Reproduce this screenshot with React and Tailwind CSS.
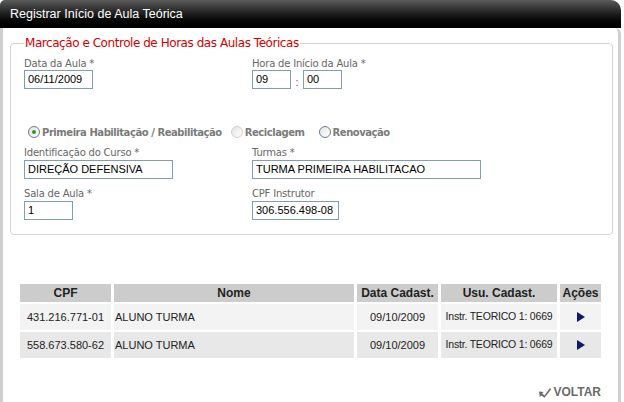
import React from 'react'

const rows = [
  { cpf: '431.216.771-01', nome: 'ALUNO TURMA', data: '09/10/2009', usu: 'Instr. TEORICO 1: 0669', bg: 'bg-[#f3f3f3]' },
  { cpf: '558.673.580-62', nome: 'ALUNO TURMA', data: '09/10/2009', usu: 'Instr. TEORICO 1: 0669', bg: 'bg-[#e8e8e8]' },
]

const Label = ({ children }) => (
  <div className="text-[10px] leading-[13px] text-[#666] font-['DejaVu_Sans',sans-serif] tracking-[-0.2px]">{children}</div>
)

const Field = ({ value, w }) => (
  <div className={`${w} h-[19px] border border-[#7f9db9] bg-white px-[3px] text-[11px] leading-[17px] text-black font-['Liberation_Sans',Arial,sans-serif]`}>
    {value}
  </div>
)

const Radio = ({ checked, label, faded }) => (
  <div className="flex items-center gap-[2px]">
    <span className={`w-[12px] h-[12px] rounded-full border flex items-center justify-center bg-gradient-to-br from-[#e4e4e4] to-white ${faded ? 'border-[#d0d0d0]' : 'border-[#6b7b8c]'}`}>
      {checked && <span className="w-[4px] h-[4px] rounded-full bg-[#21a121]" />}
    </span>
    <span className="text-[10px] font-bold text-[#7a7a7a] font-['DejaVu_Sans',sans-serif] tracking-[-0.45px]">{label}</span>
  </div>
)

export default function App() {
  return (
    <div className="w-[621px] bg-white font-['Liberation_Sans',Arial,sans-serif]">
      <div className="h-[28px] rounded-tl-[5px] rounded-tr-[10px] bg-gradient-to-b from-[#5c5c5c] via-[#1e1e1e] to-black px-[10px] flex items-center">
        <span className="text-white text-[12.5px] font-['Liberation_Sans',Arial,sans-serif]">Registrar Início de Aula Teórica</span>
      </div>
      <div className="border-l-[3px] border-r-[3px] border-[#cfcfcf] rounded-tr-[6px] pt-[8px] pl-[7px] pr-[5px] h-[374px]">
        <fieldset className="border border-[#d4d4cc] rounded-[4px] pl-[13px] pr-[10px] pb-[14px] min-w-0">
          <legend className="ml-0 px-[1px] text-[12px] text-[#d40000] font-['DejaVu_Sans',sans-serif] tracking-[-0.45px] leading-[14px]">
            Marcação e Controle de Horas das Aulas Teóricas
          </legend>
          <div className="grid grid-cols-[228px_1fr] mt-[7px]">
            <div>
              <Label>Data da Aula *</Label>
              <Field value="06/11/2009" w="w-[69px]" />
            </div>
            <div>
              <Label>Hora de Início da Aula *</Label>
              <div className="flex items-end">
                <Field value="09" w="w-[39px]" />
                <span className="w-[12px] text-center text-[11px] leading-[14px] text-[#666]">:</span>
                <Field value="00" w="w-[39px]" />
              </div>
            </div>
          </div>
          <div className="flex items-center mt-[36px] pl-[4px] h-[14px]">
            <Radio checked label="Primeira Habilitação / Reabilitação" />
            <div className="ml-[9px]"><Radio faded label="Reciclagem" /></div>
            <div className="ml-[14px]"><Radio label="Renovação" /></div>
          </div>
          <div className="grid grid-cols-[228px_1fr] mt-[7px]">
            <div>
              <Label>Identificação do Curso *</Label>
              <div className="mt-[1px]"><Field value="DIREÇÃO DEFENSIVA" w="w-[149px]" /></div>
            </div>
            <div>
              <Label>Turmas *</Label>
              <div className="mt-[1px]"><Field value="TURMA PRIMEIRA HABILITACAO" w="w-[229px]" /></div>
            </div>
          </div>
          <div className="grid grid-cols-[228px_1fr] mt-[8px]">
            <div>
              <Label>Sala de Aula *</Label>
              <div className="mt-[1px]"><Field value="1" w="w-[49px]" /></div>
            </div>
            <div>
              <Label>CPF Instrutor</Label>
              <div className="mt-[1px]"><Field value="306.556.498-08" w="w-[87px]" /></div>
            </div>
          </div>
        </fieldset>

        <div className="mt-[47px] pl-[7px]">
          <table className="border-separate border-spacing-x-[3px] border-spacing-y-[2px] text-[11px] text-[#222]">
            <thead>
              <tr className="bg-[#cccccc] text-[12px] font-bold text-[#222]">
                <th className="w-[91px] h-[17px] p-0 leading-[17px]">CPF</th>
                <th className="w-[240px] p-0">Nome</th>
                <th className="w-[81px] p-0">Data Cadast.</th>
                <th className="w-[116px] p-0">Usu. Cadast.</th>
                <th className="w-[41px] p-0">Ações</th>
              </tr>
            </thead>
            <tbody>
              {rows.map((r, i) => (
                <tr key={i} className={r.bg}>
                  <td className="h-[26px] p-0 text-center">{r.cpf}</td>
                  <td className="p-0 pl-[1px]">{r.nome}</td>
                  <td className="p-0 text-center">{r.data}</td>
                  <td className="p-0 text-center text-[10.5px] tracking-[-0.2px]">{r.usu}</td>
                  <td className="p-0">
                    <div className="flex justify-center">
                      <svg width="8" height="10" viewBox="0 0 8 10"><polygon points="0,0 8,5 0,10" fill="#0a1a6e" /></svg>
                    </div>
                  </td>
                </tr>
              ))}
            </tbody>
          </table>
        </div>

        <div className="flex justify-end items-center gap-[2px] mt-[23px] pr-[12px]">
          <svg width="12" height="11" viewBox="0 0 12 11">
            <path d="M11 1 L5.5 8.5 L3.2 6.4 L4.6 5 L0 4.5 L0.8 10 L2.3 8.6 L5.5 10.8 L12 2.5 Z" fill="#6b6b6b" />
          </svg>
          <span className="text-[12px] font-bold text-[#6b6b6b]">VOLTAR</span>
        </div>
      </div>
    </div>
  )
}
